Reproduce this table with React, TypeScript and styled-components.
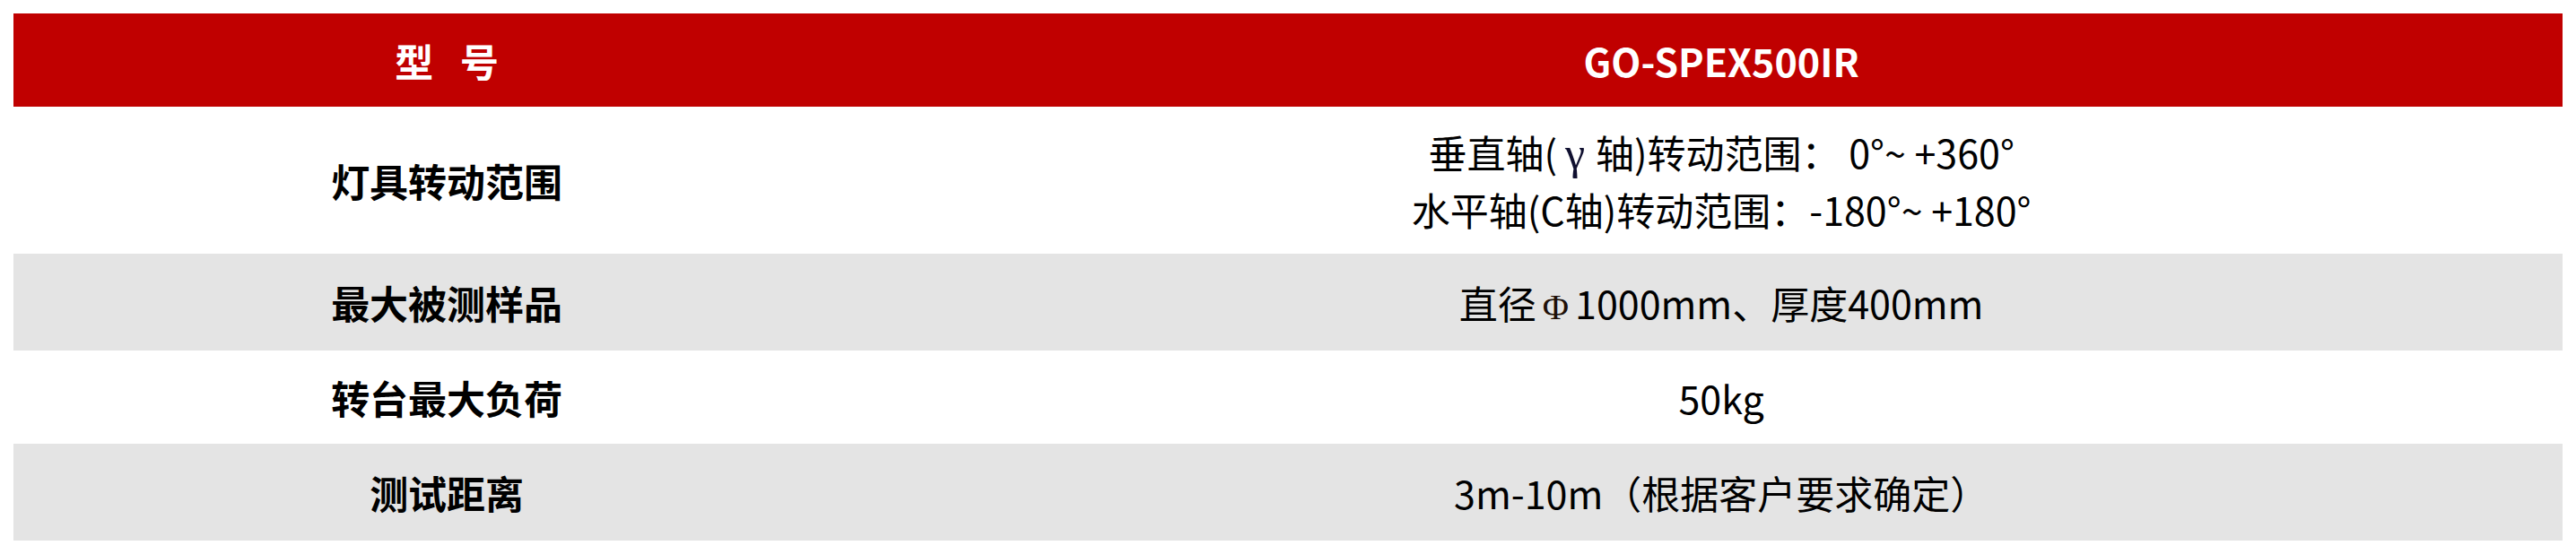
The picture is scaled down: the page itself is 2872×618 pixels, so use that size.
import React from "react";
import styled, { createGlobalStyle } from "styled-components";

const Global = createGlobalStyle`
  html, body { margin: 0; padding: 0; background: #ffffff; }
  body { font-family: "Noto Sans CJK SC", "Noto Sans", sans-serif; }
`;

const Page = styled.div`
  padding: 15px;
`;

const Table = styled.div`
  display: flex;
  flex-direction: column;
  width: 100%;
`;

type Tone = "head" | "white" | "gray";

const Row = styled.div<{ $tone: Tone; $h: number }>`
  display: grid;
  grid-template-columns: 34% 66%;
  height: ${(p) => p.$h}px;
  background: ${(p) =>
    p.$tone === "head" ? "#c00000" : p.$tone === "gray" ? "#e4e4e4" : "#ffffff"};
  color: ${(p) => (p.$tone === "head" ? "#ffffff" : "#000000")};
`;

const Cell = styled.div<{ $bold?: boolean }>`
  display: flex;
  flex-direction: column;
  align-items: center;
  justify-content: center;
  text-align: center;
  font-family: "Noto Sans CJK SC", "Noto Sans", sans-serif;
  font-size: 43px;
  line-height: 64px;
  font-weight: ${(p) => (p.$bold ? 700 : 400)};
  white-space: nowrap;
`;

const HeadLabel = styled.span`
  word-spacing: 20px;
`;

const Greek = styled.span`
  font-family: "Liberation Serif", "DejaVu Serif", serif;
  font-weight: 400;
  font-size: 50px;
  line-height: 0;
  color: #101030;
  margin: 0 12px 0 9px;
`;

const Phi = styled.span`
  font-family: "Liberation Serif", "DejaVu Serif", serif;
  font-size: 40px;
  line-height: 0;
  color: #201008;
  margin: 0 7px 0 7px;
`;

const Line = styled.div``;

export default function App() {
  return (
    <>
      <Global />
      <Page>
        <Table>
          <Row $tone="head" $h={104}>
            <Cell $bold>
              <HeadLabel>型 号</HeadLabel>
            </Cell>
            <Cell $bold>GO-SPEX500IR</Cell>
          </Row>
          <Row $tone="white" $h={164}>
            <Cell $bold>灯具转动范围</Cell>
            <Cell>
              <Line>
                垂直轴(<Greek>γ</Greek>轴)转动范围： 0°~ +360°
              </Line>
              <Line>水平轴(C轴)转动范围：-180°~ +180°</Line>
            </Cell>
          </Row>
          <Row $tone="gray" $h={108}>
            <Cell $bold>最大被测样品</Cell>
            <Cell>
              <Line>
                直径<Phi>Φ</Phi>1000mm、厚度400mm
              </Line>
            </Cell>
          </Row>
          <Row $tone="white" $h={104}>
            <Cell $bold>转台最大负荷</Cell>
            <Cell>50kg</Cell>
          </Row>
          <Row $tone="gray" $h={108}>
            <Cell $bold>测试距离</Cell>
            <Cell>3m-10m（根据客户要求确定）</Cell>
          </Row>
        </Table>
      </Page>
    </>
  );
}
